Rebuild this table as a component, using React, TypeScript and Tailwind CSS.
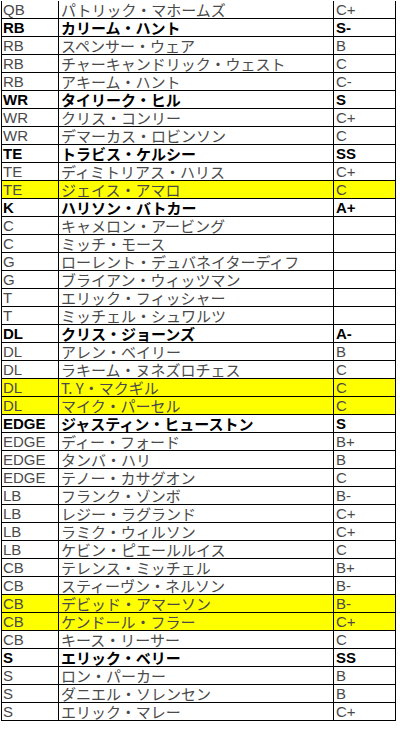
import React from "react";

type Row = [string, string, string, boolean?, boolean?];

const rows: Row[] = [
  ["QB", "パトリック・マホームズ", "C+"],
  ["RB", "カリーム・ハント", "S-", true],
  ["RB", "スペンサー・ウェア", "B"],
  ["RB", "チャーキャンドリック・ウェスト", "C"],
  ["RB", "アキーム・ハント", "C-"],
  ["WR", "タイリーク・ヒル", "S", true],
  ["WR", "クリス・コンリー", "C+"],
  ["WR", "デマーカス・ロビンソン", "C"],
  ["TE", "トラビス・ケルシー", "SS", true],
  ["TE", "ディミトリアス・ハリス", "C+"],
  ["TE", "ジェイス・アマロ", "C", false, true],
  ["K", "ハリソン・バトカー", "A+", true],
  ["C", "キャメロン・アービング", ""],
  ["C", "ミッチ・モース", ""],
  ["G", "ローレント・デュバネイターディフ", ""],
  ["G", "ブライアン・ウィッツマン", ""],
  ["T", "エリック・フィッシャー", ""],
  ["T", "ミッチェル・シュワルツ", ""],
  ["DL", "クリス・ジョーンズ", "A-", true],
  ["DL", "アレン・ベイリー", "B"],
  ["DL", "ラキーム・ヌネズロチェス", "C"],
  ["DL", "T. Y・マクギル", "C", false, true],
  ["DL", "マイク・パーセル", "C", false, true],
  ["EDGE", "ジャスティン・ヒューストン", "S", true],
  ["EDGE", "ディー・フォード", "B+"],
  ["EDGE", "タンバ・ハリ", "B"],
  ["EDGE", "テノー・カサグオン", "C"],
  ["LB", "フランク・ゾンボ", "B-"],
  ["LB", "レジー・ラグランド", "C+"],
  ["LB", "ラミク・ウィルソン", "C+"],
  ["LB", "ケビン・ピエールルイス", "C"],
  ["CB", "テレンス・ミッチェル", "B+"],
  ["CB", "スティーヴン・ネルソン", "B-"],
  ["CB", "デビッド・アマーソン", "B-", false, true],
  ["CB", "ケンドール・フラー", "C+", false, true],
  ["CB", "キース・リーサー", "C"],
  ["S", "エリック・ベリー", "SS", true],
  ["S", "ロン・パーカー", "B"],
  ["S", "ダニエル・ソレンセン", "B"],
  ["S", "エリック・マレー", "C+"],
];

const latin = "font-['Liberation_Sans',Arial,sans-serif]";
const jp = "font-['Noto_Sans_CJK_JP',sans-serif]";

export default function App() {
  return (
    <div className="w-[400px] h-[736px] bg-white pt-px pl-px">
      {rows.map(([pos, name, grade, bold, yellow], i) => (
        <div
          key={i}
          className={`grid grid-cols-[57px_275px_62px] w-[395px] h-[18px] border-l border-b border-black ${
            yellow ? "bg-[#ffff00]" : "bg-white"
          } ${bold ? "font-bold text-black" : "font-normal text-[#4a4a4a]"}`}
        >
          <div className={`border-r border-black pl-[1px] h-[17px] ${latin} text-[15px] leading-[17px]`}>
            {pos}
          </div>
          <div className={`border-r border-black pl-[2px] h-[17px] whitespace-nowrap ${jp} text-[15px] leading-[17px]`}>
            {name}
          </div>
          <div className={`border-r border-black pl-[2px] h-[17px] ${latin} text-[15px] leading-[17px]`}>
            {grade}
          </div>
        </div>
      ))}
    </div>
  );
}
